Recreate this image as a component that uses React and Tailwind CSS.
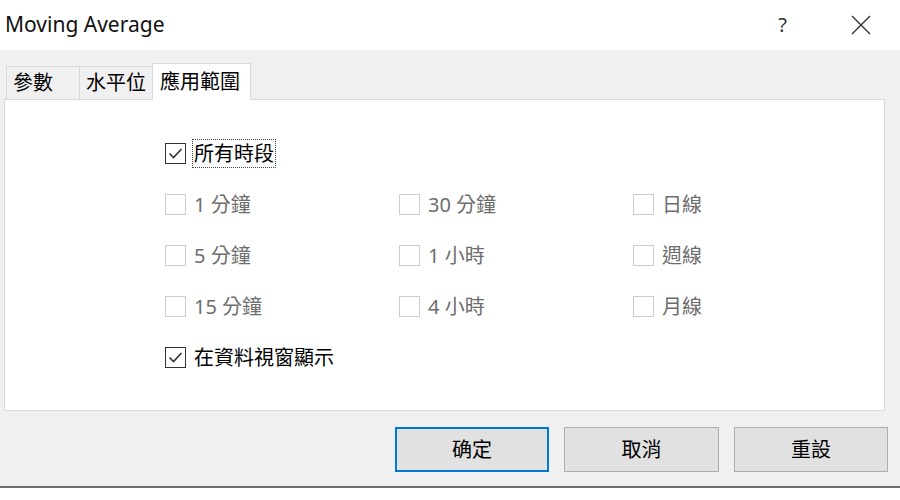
import React from 'react';

const FONT = "font-['Noto_Sans','Noto_Sans_CJK_TC',sans-serif]";

const rows = [
  ['1 分鐘', '30 分鐘', '日線'],
  ['5 分鐘', '1 小時', '週線'],
  ['15 分鐘', '4 小時', '月線'],
];

function Box({ checked }) {
  if (checked) {
    return (
      <span className="w-[21px] h-[21px] border border-[#333333] bg-white flex items-center justify-center shrink-0">
        <svg width="19" height="19" viewBox="0 0 19 19">
          <path d="M3.5 9.5 L7.5 13.5 L15.5 5" fill="none" stroke="#333333" strokeWidth="1.6" />
        </svg>
      </span>
    );
  }
  return <span className="w-[21px] h-[21px] border border-[#cccccc] bg-white shrink-0" />;
}

function Check({ label, checked, disabled, focus }) {
  return (
    <div className="flex items-center h-[51px]">
      <Box checked={checked} />
      <span
        className={
          'ml-[6px] text-[20px] leading-[27px] px-[1px] ' +
          (disabled ? 'text-[#6d6d6d] ' : 'text-[#000000] ') +
          (focus ? 'border border-dotted border-[#444444]' : 'border border-transparent')
        }
      >
        {label}
      </span>
    </div>
  );
}

function Tab({ label, active }) {
  if (active) {
    return (
      <div className="relative z-10 -mb-px h-[37px] w-[99px] pl-[7px] bg-white border border-b-0 border-[#d9d9d9] flex items-center text-[20px] text-black">
        {label}
      </div>
    );
  }
  return (
    <div className="h-[33px] w-[74px] -mr-px pl-[6px] bg-[#f0f0f0] border border-b-0 border-[#d9d9d9] flex items-center text-[20px] text-black whitespace-nowrap">
      {label}
    </div>
  );
}

export default function App() {
  return (
    <div className={'w-[900px] h-[500px] bg-white flex flex-col overflow-hidden ' + FONT}>
      <div className="h-[50px] flex items-center shrink-0">
        <span className="ml-[5px] text-[21px] text-[#111111]">Moving Average</span>
        <div className="ml-auto flex items-center">
          <span className="text-[20px] text-[#333333] mr-[64px]">?</span>
          <svg width="20" height="20" viewBox="0 0 20 20" className="mr-[29px]">
            <path d="M1 1 L19 19 M19 1 L1 19" stroke="#333333" strokeWidth="1.4" fill="none" />
          </svg>
        </div>
      </div>

      <div className="h-[436px] bg-[#f0f0f0] pl-[4px] pt-[13px] flex flex-col shrink-0">
        <div className="flex items-end ml-[2px]">
          <Tab label="參數" />
          <Tab label="水平位" />
          <Tab label="應用範圍" active />
        </div>
        <div className="w-[881px] h-[312px] bg-white border border-[#d9d9d9] pt-[28px] pl-[160px]">
          <Check label="所有時段" checked focus />
          {rows.map((r, i) => (
            <div key={i} className="grid grid-cols-[234px_234px_234px]">
              {r.map((t) => (
                <Check key={t} label={t} disabled />
              ))}
            </div>
          ))}
          <Check label="在資料視窗顯示" checked />
        </div>
        <div className="flex justify-end gap-[15px] mt-[16px] pr-[12px]">
          <button className="w-[154px] h-[45px] bg-[#e1e1e1] border-2 border-[#0078d7] text-[20px] text-black">确定</button>
          <button className="w-[155px] h-[45px] bg-[#e1e1e1] border border-[#adadad] text-[20px] text-black">取消</button>
          <button className="w-[154px] h-[45px] bg-[#e1e1e1] border border-[#adadad] text-[20px] text-black">重設</button>
        </div>
      </div>
      <div className="h-[2px] bg-[#6b6b6b] shrink-0" />
      <div className="flex-1 bg-white" />
    </div>
  );
}
